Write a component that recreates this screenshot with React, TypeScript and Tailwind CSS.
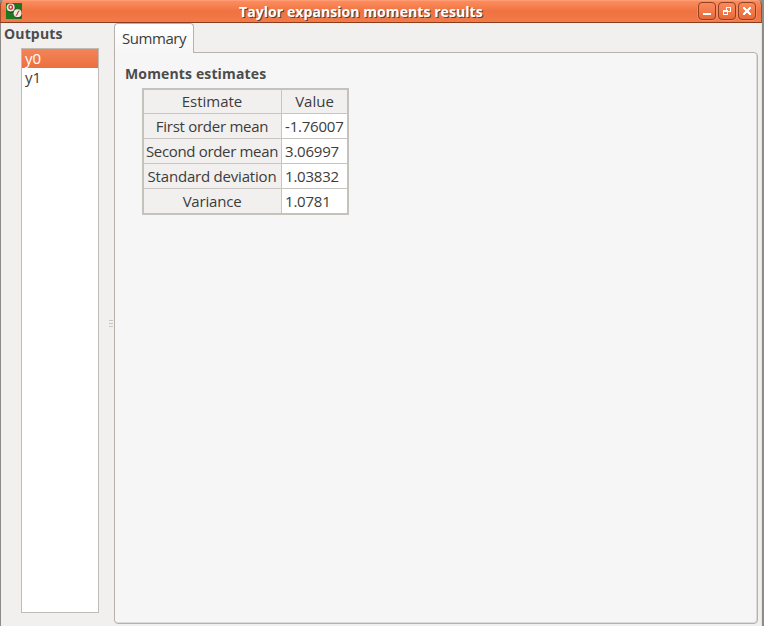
import type { ReactNode } from "react";

const rows = [
  { label: "First order mean", value: "-1.76007", tracking: "tracking-[-0.27px]" },
  { label: "Second order mean", value: "3.06997", tracking: "tracking-[-0.33px]" },
  { label: "Standard deviation", value: "1.03832", tracking: "tracking-[-0.2px]" },
  { label: "Variance", value: "1.0781", tracking: "tracking-[-0.2px]" },
];

function WindowButton({ label, children }: { label: string; children: ReactNode }) {
  return (
    <button
      aria-label={label}
      className="flex h-[18px] w-[18px] items-center justify-center rounded-[4px] border border-[#91411f] bg-linear-to-b from-[#fb8a5c] to-[#e8693a] shadow-[0_0_0_1px_#f58a60]"
    >
      <svg className="shrink-0" width="16" height="16" viewBox="0 0 16 16" shapeRendering="crispEdges" fill="#fff">
        {children}
      </svg>
    </button>
  );
}

function AppIcon() {
  return (
    <svg className="ml-[6px] mt-[3px]" width="16" height="16" viewBox="0 0 16 16">
      <rect width="16" height="16" fill="#207520" />
      <circle cx="5.3" cy="5.5" r="4.2" fill="#134414" />
      <circle cx="12" cy="11" r="4.2" fill="#134414" />
      <circle cx="4.7" cy="4.4" r="4" fill="#f1e5dc" />
      <ellipse cx="4.7" cy="4.2" rx="1.7" ry="2" fill="none" stroke="#c8302e" strokeWidth="1.3" />
      <circle cx="11.6" cy="10.2" r="4" fill="#f3eadf" />
      <path d="M13.4 7.8c-2 0-1.6 4.6-3.6 4.8" fill="none" stroke="#bd3936" strokeWidth="1.2" />
    </svg>
  );
}

export default function App() {
  return (
    <div className="flex h-[626px] w-[764px] flex-col overflow-hidden bg-[#8f8d89] font-['Open_Sans','Noto_Sans',sans-serif] text-[15px] text-[#3c3c3c]">
      <header className="flex h-[23px] w-[762px] shrink-0 rounded-t-[5px] border-x border-b border-t border-x-[#a14c2a] border-t-[#ff9c73] border-b-[#8b3c1c] bg-linear-to-b from-[#fd8c5c] via-[#ef7241] to-[#f37a49]">
        <div className="-ml-px -mt-px w-[239px] shrink-0">
          <AppIcon />
        </div>
        <h1 className="w-[459px] whitespace-nowrap text-[14px] leading-[21px] font-bold tracking-[0.07px] text-white [text-shadow:1px_1px_0_#51433c]">
          Taylor expansion moments results
        </h1>
        <div className="flex gap-[2px] pt-px">
          <WindowButton label="Minimize">
            <path d="M4 10h8v2H4z" />
          </WindowButton>
          <WindowButton label="Restore">
            <path fillRule="evenodd" d="M7 4h5v5H9v3H4V7h3zM8 5v2h1v1h2V5zM5 9v2h3V9z" />
          </WindowButton>
          <WindowButton label="Close">
            <path d="M4 4h2v1h1v1h2V5h1V4h2v2h-1v1h-1v2h1v1h1v2h-2v-1H9v-1H7v1H6v1H4v-2h1V9h1V7H5V6H4z" />
          </WindowButton>
        </div>
      </header>

      <main className="flex h-[603px] w-[762px] border-l border-r border-l-[#8e8c88] border-r-[#e4e2df] bg-[#f1f0ee]">
        <aside className="w-[98px] shrink-0">
          <h2 className="h-[25px] pl-[3px] text-[14px] leading-[22px] font-bold tracking-[0.15px] text-[#4c4c4c]">
            Outputs
          </h2>
          <ul className="ml-5 h-[565px] w-[78px] border border-[#bfbcb6] bg-white">
            <li className="h-[19px] bg-linear-to-b from-[#f58458] to-[#ea6f3f] pl-[3px] leading-[18px] text-white">y0</li>
            <li className="h-[19px] pl-[3px] leading-[18px]">y1</li>
          </ul>
        </aside>

        <div className="flex w-[15px] flex-col items-end gap-[2px] pr-px pt-[297px]">
          <i className="h-px w-1 bg-[#c9c6c1]" />
          <i className="h-px w-1 bg-[#c9c6c1]" />
          <i className="h-px w-1 bg-[#c9c6c1]" />
        </div>

        <section className="w-[644px]">
          <div className="relative z-10 h-[30px] w-20 rounded-t-[4px] border border-b-0 border-[#b5b2ac] bg-linear-to-b from-white to-[#f6f6f6] pl-[7px] leading-[29px] tracking-[-0.45px]">
            Summary
          </div>
          <div className="-mt-px h-[572px] rounded-[4px] rounded-tl-none border border-[#b5b2ac] bg-[#f6f6f6] pl-[10px] pt-[10px] shadow-[inset_-1px_-1px_0_#dddbd7]">
            <h3 className="h-[25px] text-[14px] leading-[22px] font-bold tracking-[0.14px] text-[#4c4c4c]">
              Moments estimates
            </h3>
            <div className="ml-[17px] grid h-[127px] w-[207px] grid-cols-[137px_65px] grid-rows-[23px_24px_24px_24px_24px] gap-px border-2 border-[#c5c2bc] bg-[#c8c5c0] text-[15px] leading-[24px]">
              <div className="bg-[#f1f0ee] pr-px text-center leading-[23px]">Estimate</div>
              <div className="bg-[#f1f0ee] text-center leading-[23px]">Value</div>
              {rows.map((row) => (
                <div key={row.label} className="contents whitespace-nowrap">
                  <div className={`bg-[#f1f0ee] pr-px text-center ${row.tracking}`}>{row.label}</div>
                  <div className="bg-white pl-[3px] pt-px leading-[23px] tracking-[-0.2px]">{row.value}</div>
                </div>
              ))}
            </div>
          </div>
        </section>
      </main>
    </div>
  );
}
